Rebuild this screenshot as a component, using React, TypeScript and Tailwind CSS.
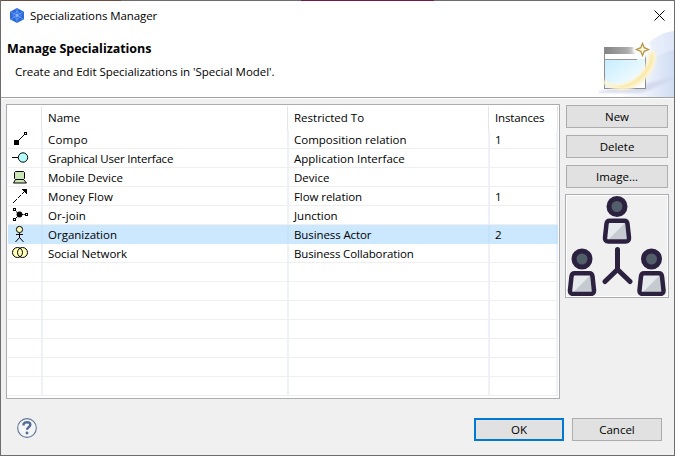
import type { ReactNode } from "react";

type Row = { icon: ReactNode; name: string; type: string; count?: string; nameStyle?: string; typeStyle?: string };

const CompositionIcon = () => (
  <svg width="18" height="18" viewBox="0 0 18 18" shapeRendering="crispEdges">
    <path d="M3 10h5v5H3z" />
    <path d="M8 9h1v1H8zM9 8h1v1H9zM10 7h1v1h-1zM11 6h1v1h-1zM12 5h1v1h-1z" />
    <path d="M13.500 2.500h2v2h-2z" fill="#fff" stroke="#000" />
  </svg>
);
const InterfaceIcon = () => (
  <svg width="18" height="18" viewBox="0 0 18 18">
    <path d="M1 8.500h6" stroke="#000" />
    <circle cx="12" cy="8.500" r="4.700" fill="#b5ffff" stroke="#000" />
  </svg>
);
const DeviceIcon = () => (
  <svg width="18" height="18" viewBox="0 0 18 18">
    <path d="M4.500 3.500h8l1 1v6l-1 1h-8l-1-1v-6z" fill="#c9e7b7" stroke="#000" />
    <path d="M4.500 11.500h8l3 3.500h-13z" fill="#c9e7b7" stroke="#000" />
  </svg>
);
const FlowIcon = () => (
  <svg width="18" height="18" viewBox="0 0 18 18" shapeRendering="crispEdges">
    <path d="M11 2h5v5h-1V6h-1V5h-1V4h-1V3h-1z" />
    <path d="M13 4h1v1h-1zM12 5h1v1h-1zM11 6h1v1h-1zM9 8h1v1H9zM8 9h1v1H8zM7 10h1v1H7zM5 12h1v1H5zM4 13h1v1H4zM2 15h1v1H2zM3 14h1v1H3z" />
  </svg>
);
const JunctionIcon = () => (
  <svg width="18" height="18" viewBox="0 0 18 18">
    <path d="M5 5.500l3.500 3-3.500 3.500M8 8.500h6" fill="none" stroke="#000" strokeDasharray="2 .6" />
    <circle cx="8.500" cy="8.500" r="2.900" />
    <path d="M2.500 2.500h2v2h-2zM2.500 12.500h2v2h-2zM14.500 7.500h2v2h-2z" fill="#fff" stroke="#000" shapeRendering="crispEdges" />
  </svg>
);
const ActorIcon = () => (
  <svg width="18" height="18" viewBox="0 0 18 18">
    <circle cx="8.500" cy="4.500" r="3.100" fill="#ffffb5" stroke="#000" />
    <path d="M8.500 8v5M5 9.500h7M8.500 12.500l-4 4.500M8.500 12.500l4 4.500" fill="none" stroke="#000" />
  </svg>
);
const CollaborationIcon = () => (
  <svg width="18" height="18" viewBox="0 0 18 18">
    <circle cx="6.500" cy="8.500" r="5" fill="#ffffb5" />
    <circle cx="11.500" cy="8.500" r="5" fill="#ffffb5" stroke="#000" />
    <circle cx="6.500" cy="8.500" r="5" fill="none" stroke="#000" />
  </svg>
);

const rows: Row[] = [
  { icon: <CompositionIcon />, name: "Compo", type: "Composition relation", count: "1", nameStyle: "tracking-[0.2px]" },
  { icon: <InterfaceIcon />, name: "Graphical User Interface", type: "Application Interface", nameStyle: "tracking-[-0.2px]" },
  { icon: <DeviceIcon />, name: "Mobile Device", type: "Device" },
  { icon: <FlowIcon />, name: "Money Flow", type: "Flow relation", count: "1", nameStyle: "tracking-[0.08px]", typeStyle: "tracking-[-0.08px]" },
  { icon: <JunctionIcon />, name: "Or-join", type: "Junction", nameStyle: "tracking-[0.1px]" },
  { icon: <ActorIcon />, name: "Organization", type: "Business Actor", count: "2", typeStyle: "tracking-[-0.1px]" },
  { icon: <CollaborationIcon />, name: "Social Network", type: "Business Collaboration", nameStyle: "tracking-[-0.06px]", typeStyle: "tracking-[-0.14px]" },
  ...Array.from({ length: 7 }, () => ({ icon: null, name: "", type: "" })),
];

const AppLogo = () => (
  <svg width="14" height="15" viewBox="0 0 14 15">
    <path d="M7 0l7 3.700v7.600L7 15 0 11.300V3.700z" fill="#2c6bdc" />
    <path d="M7 1v13M1 4l12 7M13 4L1 11M7 3L3 7.500l4 4 4-4z" stroke="#6fa0f0" strokeWidth=".8" fill="none" />
    <circle cx="7" cy="7.500" r="1.400" fill="#8fb6f8" />
  </svg>
);

const Banner = () => (
  <svg width="76" height="72" viewBox="0 0 76 72">
    <defs>
      <linearGradient id="sky" x1="0" x2="1"><stop stopColor="#fbfcff" /><stop offset="1" stopColor="#dde6f8" /></linearGradient>
      <linearGradient id="low" x1="0" x2="1"><stop stopColor="#fff" /><stop offset=".5" stopColor="#edf2fb" /><stop offset="1" stopColor="#cfdcf3" /></linearGradient>
      <linearGradient id="bar" x1="0" x2="1"><stop stopColor="#858585" /><stop offset=".55" stopColor="#aaa" /><stop offset=".9" stopColor="#fff" /></linearGradient>
      <linearGradient id="pane" x1="0" y1="0" x2="1" y2="1"><stop stopColor="#c6edff" /><stop offset="1" stopColor="#fff" /></linearGradient>
      <filter id="soft" x="-20%" y="-20%" width="140%" height="140%"><feGaussianBlur stdDeviation=".8" /></filter>
    </defs>
    <path d="M76 6C58 8 42 22 28 44l48 5z" fill="url(#sky)" />
    <path d="M76 25C58 28 40 45 21 72h55z" fill="url(#low)" />
    <path d="M1 66l46-7 33-8-28 14-9 3H1z" fill="#ccd2e9" opacity=".7" filter="url(#soft)" />
    <rect x="6.500" y="22.500" width="41" height="41" fill="#fff" stroke="#8c8c8c" />
    <rect x="7" y="22" width="40" height="7" fill="url(#bar)" />
    <rect x="7" y="34" width="40" height="29" fill="url(#pane)" />
    <path d="M7 34.500h32" stroke="#999" />
    <circle cx="44" cy="24" r="9" fill="#fff" opacity=".95" filter="url(#soft)" />
    <path d="M57 29C59 47 38 67 21 64 12 63 6 59 3 54 12 61 21 61 29 58 43 52 50 41 51 30c1-4 6-4 6-1z" fill="#fbefbb" stroke="#fff6d6" strokeWidth="1.500" filter="url(#soft)" />
    <path d="M55 30C56 46 36 64 20 62 34 60 51 48 53 30z" fill="#f8e8ac" opacity=".75" />
    <path d="M44.500 18.500l1.800 4.200 4.200 1.800-4.200 1.800-1.800 4.200-1.800-4.200-4.200-1.800 4.200-1.800z" fill="#fff7d7" stroke="#b8954a" strokeWidth="1.300" />
  </svg>
);

const Person = ({ x, y }: { x: number; y: number }) => (
  <g transform={`translate(${x} ${y})`}>
    <circle cx="14.500" cy="11" r="8" fill="#525e69" stroke="#2d2140" strokeWidth="5" />
    <path d="M7 25.300h15q2.500 0 3 3l1.500 14q.3 3.700-3.500 3.700H6q-3.800 0-3.500-3.700L4 28.300q.5-3 3-3z" fill="#e6eaed" />
    <path d="M24 26L6 44h19z" fill="#c5cbd0" />
    <path d="M7 25.300h15q2.500 0 3 3l1.500 14q.3 3.700-3.500 3.700H6q-3.800 0-3.500-3.700L4 28.300q.5-3 3-3z" fill="none" stroke="#2d2140" strokeWidth="4.500" />
  </g>
);

const PushButton = ({ children, className }: { children: ReactNode; className: string }) => (
  <button className={`flex h-[23px] items-center justify-center border bg-[#e1e1e1] ${className}`}>{children}</button>
);

export default function App() {
  return (
    <main className="flex h-[456px] w-[675px] flex-col overflow-hidden border border-t-0 border-[#6d6d6d] bg-[#f0f0f0] font-['Open_Sans','Noto_Sans',sans-serif] text-[11.5px] leading-[18px] text-black">
      <div className="flex h-px shrink-0 bg-[#6d6d6d]">
        <div className="w-[120px] bg-[#6f4b40]" />
        <div className="ml-[180px] w-[133px] bg-[#74194a]" />
      </div>
      <header className="flex h-[98px] shrink-0 border-b border-white bg-white">
        <div className="flex h-[97px] w-full justify-between border-b border-[#a0a0a0]">
          <div>
            <div className="flex h-[29px] items-center gap-[6px] pl-[9px]">
              <AppLogo />
              <span className="tracking-[-0.09px]">Specializations Manager</span>
            </div>
            <h1 className="mt-[10px] pl-[6px] text-[12.5px] font-bold tracking-[-0.05px]">Manage Specializations</h1>
            <p className="mt-[5px] pl-[14px] tracking-[-0.05px]">Create and Edit Specializations in 'Special Model'.</p>
          </div>
          <div className="flex w-[76px] flex-col">
            <svg className="ml-[56px] mt-[9px] shrink-0" width="11" height="11" viewBox="0 0 11 11">
              <path d="M.5.500l10 10M10.500.500l-10 10" stroke="#000" strokeWidth="1" />
            </svg>
            <div className="mt-[4px]"><Banner /></div>
          </div>
        </div>
      </header>

      <section className="flex h-[300px] shrink-0 pl-[5px] pt-[5px]">
        <div className="h-[295px] w-[554px] shrink-0 border border-[#abadb3] bg-white px-px pt-px">
          <div className="grid h-[24px] w-[550px] grid-cols-[34px_246px_201px_69px]">
            <div className="border-r border-[#e5e5e5]" />
            <div className="border-r border-[#e5e5e5] pl-[6px] pt-[3px]">Name</div>
            <div className="border-r border-[#e5e5e5] pl-[6px] pt-[3px]">Restricted To</div>
            <div className="border-r border-[#e5e5e5] pl-[6px] pt-[3px] tracking-[-0.15px]">Instances</div>
          </div>
          {rows.map((row, i) => {
            const selected = i === 5;
            const cell = selected ? "h-[18px] border-r-2 border-[#c5e3fb]" : "h-[18px] border-r-2 border-[#edf1fa]";
            return (
              <div key={i} className={`grid h-[19px] w-[550px] grid-cols-[35px_246px_201px_68px] border-b leading-[20px] ${selected ? "border-[#cce8ff] bg-[#cce8ff]" : "border-[#efefef]"}`}>
                <div className={`pl-[3px] ${cell}`}>{row.icon}</div>
                <div className={`pl-[5px] ${cell} ${row.nameStyle ?? ""}`}>{row.name}</div>
                <div className={`pl-[5px] ${cell} ${row.typeStyle ?? ""}`}>{row.type}</div>
                <div className={`pl-[5px] ${cell}`}>{row.count}</div>
              </div>
            );
          })}
        </div>
        <div className="flex flex-col gap-[7px] pl-[5px] pt-px">
          <PushButton className="ml-px w-[102px] border-[#adadad]">New</PushButton>
          <PushButton className="ml-px w-[102px] border-[#adadad]">Delete</PushButton>
          <PushButton className="ml-px w-[102px] border-[#adadad]">Image...</PushButton>
          <div className="-mt-px h-[104px] w-[104px] border border-[#abadb3] bg-white p-px">
            <svg className="bg-[#f0f0f0]" width="100" height="100" viewBox="2 2 100 100">
              <Person x={37.500} y={1.500} />
              <Person x={2.500} y={54} />
              <Person x={72} y={54} />
              <path d="M52.500 55.500v20L40 87.500M52.500 75.500L65 87.500" fill="none" stroke="#2d2140" strokeWidth="5" strokeLinecap="round" />
            </svg>
          </div>
        </div>
      </section>

      <footer className="flex pl-[16px] pt-[19px]">
        <svg width="20" height="20" viewBox="0 0 21 21">
          <circle cx="10.500" cy="10.500" r="9.800" fill="#f3f5f7" stroke="#657b99" strokeWidth="1.200" />
          <path d="M6.900 7.800V6.300Q7.800 4.500 10.500 4.500q3.500 0 3.500 2.700c0 2.400-3.500 2.400-3.500 5.200" fill="none" stroke="#536b91" strokeWidth="2.500" />
          <circle cx="10.500" cy="15.700" r="1.500" fill="#536b91" />
        </svg>
        <PushButton className="ml-[437px] w-[90px] border-2 border-[#0078d7]">OK</PushButton>
        <PushButton className="ml-[8px] w-[90px] border-[#adadad]">Cancel</PushButton>
      </footer>
    </main>
  );
}
